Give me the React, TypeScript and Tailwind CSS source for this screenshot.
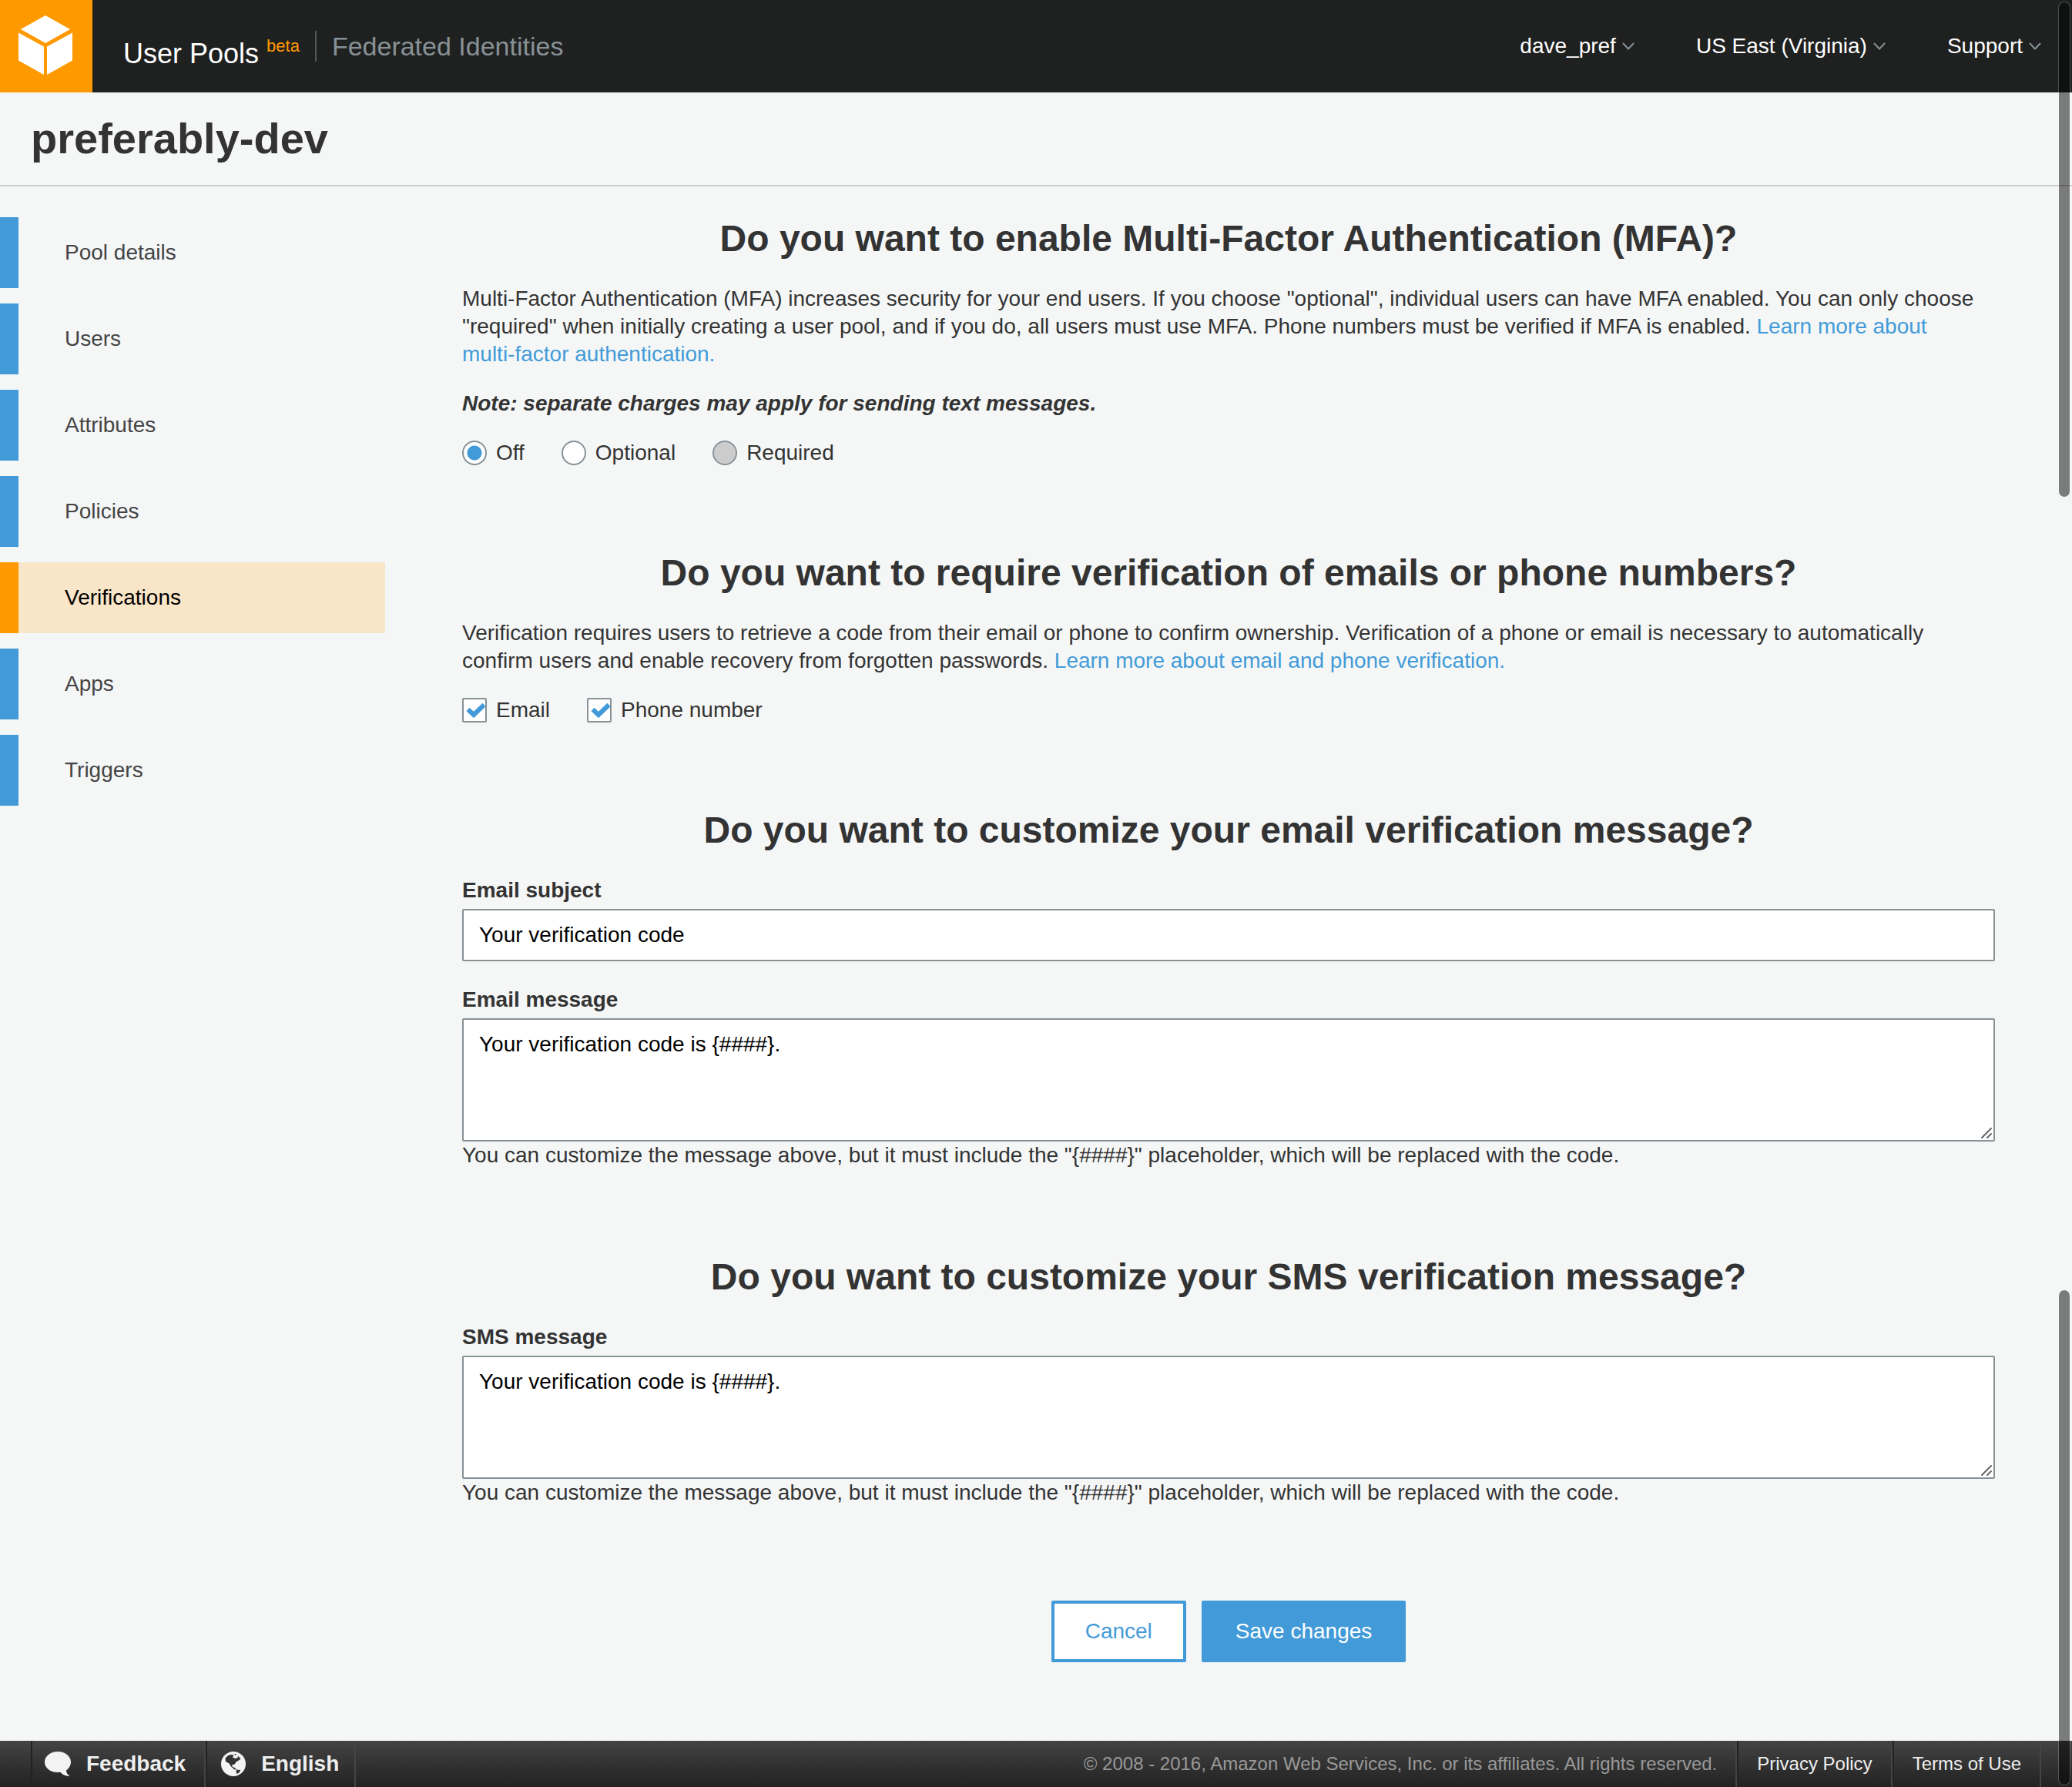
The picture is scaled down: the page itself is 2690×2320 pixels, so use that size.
import type { ReactNode } from "react";

const navItems = ["Pool details", "Users", "Attributes", "Policies", "Verifications", "Apps", "Triggers"];
const activeItem = "Verifications";

function CubeLogo() {
  return (
    <svg viewBox="0 0 120 120" className="size-30 shrink-0 bg-[#ff9900]" aria-hidden="true">
      <g fill="#fff">
        <path d="M59 20 L91 38 L59 56 L27 38 Z" />
        <path d="M24 42.500 L57 60.500 V97 L24 78.500 Z" />
        <path d="M94 42.500 L61 60.500 V97 L94 78.500 Z" />
      </g>
    </svg>
  );
}

function HeaderMenu({ label }: { label: string }) {
  return (
    <button type="button" className="flex items-center gap-2 text-[28px] leading-9 text-white">
      {label}
      <svg width="16" height="10" viewBox="0 0 16 10" fill="none" stroke="#879196" strokeWidth="2" aria-hidden="true">
        <path d="M1 1 L8 8.5 L15 1" />
      </svg>
    </button>
  );
}

function Section({ title, children }: { title: string; children: ReactNode }) {
  return (
    <section>
      <h2 className="mb-8 text-center text-5xl leading-14 font-bold">{title}</h2>
      {children}
    </section>
  );
}

function RadioOption({ label, checked, disabled }: { label: string; checked?: boolean; disabled?: boolean }) {
  return (
    <label className="flex items-center gap-3">
      <input
        type="radio"
        name="mfa"
        defaultChecked={checked}
        disabled={disabled}
        className="size-8 appearance-none rounded-full border-2 border-[#879196] bg-white bg-clip-padding checked:bg-[radial-gradient(circle,#429bd8_9px,#ffffff_10px)] disabled:bg-[#cccccc]"
      />
      {label}
    </label>
  );
}

function CheckOption({ label }: { label: string }) {
  return (
    <label className="flex items-center gap-3">
      <span className="relative size-8">
        <input
          type="checkbox"
          defaultChecked
          className="peer block size-8 appearance-none rounded-xs border-2 border-[#879196] bg-white"
        />
        <svg
          viewBox="0 0 32 32"
          className="pointer-events-none absolute inset-0 hidden size-8 peer-checked:block"
          fill="none"
          stroke="#429bd8"
          strokeWidth="6"
          aria-hidden="true"
        >
          <path d="M7.5 15 L15 22 L28.5 9" />
        </svg>
      </span>
      {label}
    </label>
  );
}

function MessageField({ id, label }: { id: string; label: string }) {
  return (
    <div className="flex flex-col pb-0.5">
      <label htmlFor={id} className="mb-1.5 font-bold">
        {label}
      </label>
      <div className="relative flex">
        <textarea
          id={id}
          defaultValue="Your verification code is {####}."
          className="h-40 w-full resize-none rounded-xs border-2 border-[#879196] bg-white px-5 py-3.5 text-black"
        />
        <svg
          viewBox="0 0 16 16"
          className="pointer-events-none absolute right-1 bottom-1 size-4"
          stroke="#666"
          strokeWidth="2"
          strokeLinecap="round"
          aria-hidden="true"
        >
          <path d="M3 15 L15 3 M10 15 L15 10" />
        </svg>
      </div>
      <p>You can customize the message above, but it must include the "{"{####}"}" placeholder, which will be replaced with the code.</p>
    </div>
  );
}

function BubbleIcon() {
  return (
    <svg viewBox="0 0 36 36" className="size-9" fill="#f3f3f3" aria-hidden="true">
      <path d="M17 2 C26.5 2 34 8 34 15.5 C34 20 31.500 24 28 26.500 C28 30 30 32 32.500 33.500 C27.500 34.500 23 32 20.500 28.800 C8 30 0 23.500 0 15.500 C0 8 7.500 2 17 2 Z" />
    </svg>
  );
}

function GlobeIcon() {
  return (
    <svg viewBox="0 0 36 36" className="size-9" aria-hidden="true">
      <circle cx="18" cy="18" r="16" fill="#f3f3f3" />
      <path
        fill="#333"
        d="M7.500 11 C9 8 12 6 16 6 L18.500 7 L17 9.500 L20.500 11 L23.500 10 L24 7.500 L27.500 11.500 L25 13.500 L22 15 L19.500 18.500 L16 19.500 L17 22 L20 23 L22 26 L19 25 L15 21.500 L12.500 17.500 L8 15 Z"
      />
      <path fill="#333" d="M22 25.500 L27 26 L26 29 L22.500 31 L21.500 29 Z" />
      <path fill="#333" d="M18.500 5 L22 5.500 L21 7 Z" />
    </svg>
  );
}

export default function App() {
  return (
    <div className="relative flex min-h-screen flex-col bg-[#f5f7f7] font-['Liberation_Sans',Arial,sans-serif] text-[28px] leading-9 text-[#333333]">
      <header className="flex h-30 items-center bg-[#1f2120]">
        <CubeLogo />
        <a href="#user-pools" className="ml-10 flex items-start text-4xl leading-10 text-white">
          <span className="pt-5">User Pools</span>
          <span className="ml-2.5 pt-2.5 text-[22px] leading-10 text-[#ff9900]">beta</span>
        </a>
        <a
          href="#federated"
          className="ml-5 flex border-l-2 border-[#555759] pl-5 text-[34px] leading-10 text-[#879196]"
        >
          Federated Identities
        </a>
        <nav className="ml-auto flex gap-20 pr-10">
          <HeaderMenu label="dave_pref" />
          <HeaderMenu label="US East (Virginia)" />
          <HeaderMenu label="Support" />
        </nav>
      </header>

      <div className="border-b-2 border-[#cccccc] px-10 py-7">
        <h1 className="text-[56px] leading-16 font-bold">preferably-dev</h1>
      </div>

      <div className="flex pt-10">
        <nav className="flex w-125 shrink-0 flex-col gap-5">
          {navItems.map((item) => (
            <a
              key={item}
              href="#section"
              aria-current={item === activeItem ? "page" : undefined}
              className={
                item === activeItem
                  ? "border-l-24 border-[#ff9900] bg-[#f9e5c7] py-7 pl-15 text-black"
                  : "border-l-24 border-[#429bd8] py-7 pl-15 text-[#444444]"
              }
            >
              {item}
            </a>
          ))}
        </nav>

        <main className="flex min-w-0 flex-1 flex-col gap-[110px] px-25 pb-25">
          <Section title="Do you want to enable Multi-Factor Authentication (MFA)?">
            <p>
              Multi-Factor Authentication (MFA) increases security for your end users. If you choose "optional",
              individual users can have MFA enabled. You can only choose "required" when initially creating a user pool,
              and if you do, all users must use MFA. Phone numbers must be verified if MFA is enabled.{" "}
              <a href="#mfa" className="text-[#429bd8]">
                Learn more about <span className="whitespace-nowrap">multi-factor</span> authentication.
              </a>
            </p>
            <p className="my-7 font-bold italic">Note: separate charges may apply for sending text messages.</p>
            <div className="flex gap-12">
              <RadioOption label="Off" checked />
              <RadioOption label="Optional" />
              <RadioOption label="Required" disabled />
            </div>
          </Section>

          <Section title="Do you want to require verification of emails or phone numbers?">
            <p className="mb-7">
              Verification requires users to retrieve a code from their email or phone to confirm ownership.
              Verification of a phone or email is necessary to automatically confirm users and enable recovery from
              forgotten passwords.{" "}
              <a href="#verification" className="text-[#429bd8]">
                Learn more about email and phone verification.
              </a>
            </p>
            <div className="flex gap-12">
              <CheckOption label="Email" />
              <CheckOption label="Phone number" />
            </div>
          </Section>

          <Section title="Do you want to customize your email verification message?">
            <div className="mb-8 flex flex-col">
              <label htmlFor="subject" className="mb-1.5 font-bold">
                Email subject
              </label>
              <input
                id="subject"
                type="text"
                defaultValue="Your verification code"
                className="h-17 rounded-xs border-2 border-[#879196] bg-white px-5 text-black"
              />
            </div>
            <MessageField id="email-message" label="Email message" />
          </Section>

          <div>
            <Section title="Do you want to customize your SMS verification message?">
              <MessageField id="sms-message" label="SMS message" />
            </Section>
            <div className="mt-30 flex justify-center gap-5">
              <button type="button" className="h-20 rounded-xs border-4 border-[#429bd8] bg-white px-10 text-[#429bd8]">
                Cancel
              </button>
              <button type="button" className="h-20 rounded-xs border-4 border-[#429bd8] bg-[#429bd8] px-10 text-white">
                Save changes
              </button>
            </div>
          </div>
        </main>
      </div>

      <footer className="mt-auto flex h-15 items-stretch bg-linear-to-b from-[#444444] to-[#222222] px-10 text-[#eeeeee]">
        <button
          type="button"
          className="flex items-center gap-4.5 border-r-2 border-l-2 border-r-[#444444] border-l-[#222222] pr-6 pl-4 font-bold"
        >
          <BubbleIcon />
          Feedback
        </button>
        <button
          type="button"
          className="flex items-center gap-4.5 border-r-2 border-l-2 border-r-[#444444] border-l-[#222222] pr-5 pl-4 font-bold"
        >
          <GlobeIcon />
          English
        </button>
        <div className="ml-auto flex text-2xl">
          <p className="flex items-center border-r-2 border-[#444444] pr-6 text-[#999999]">
            © 2008 - 2016, Amazon Web Services, Inc. or its affiliates. All rights reserved.
          </p>
          <a
            href="#privacy"
            className="flex items-center border-r-2 border-l-2 border-r-[#444444] border-l-[#222222] px-6"
          >
            Privacy Policy
          </a>
          <a
            href="#terms"
            className="flex items-center border-r-2 border-l-2 border-r-[#444444] border-l-[#222222] px-6"
          >
            Terms of Use
          </a>
        </div>
      </footer>

      <div
        aria-hidden="true"
        className="pointer-events-none absolute top-0.5 right-0.5 h-161 w-4 rounded-full border border-white/20 bg-black/50 bg-clip-padding"
      />
      <div
        aria-hidden="true"
        className="pointer-events-none absolute right-0.5 bottom-0.5 h-161 w-4 rounded-full border border-white/20 bg-black/50 bg-clip-padding"
      />
    </div>
  );
}
